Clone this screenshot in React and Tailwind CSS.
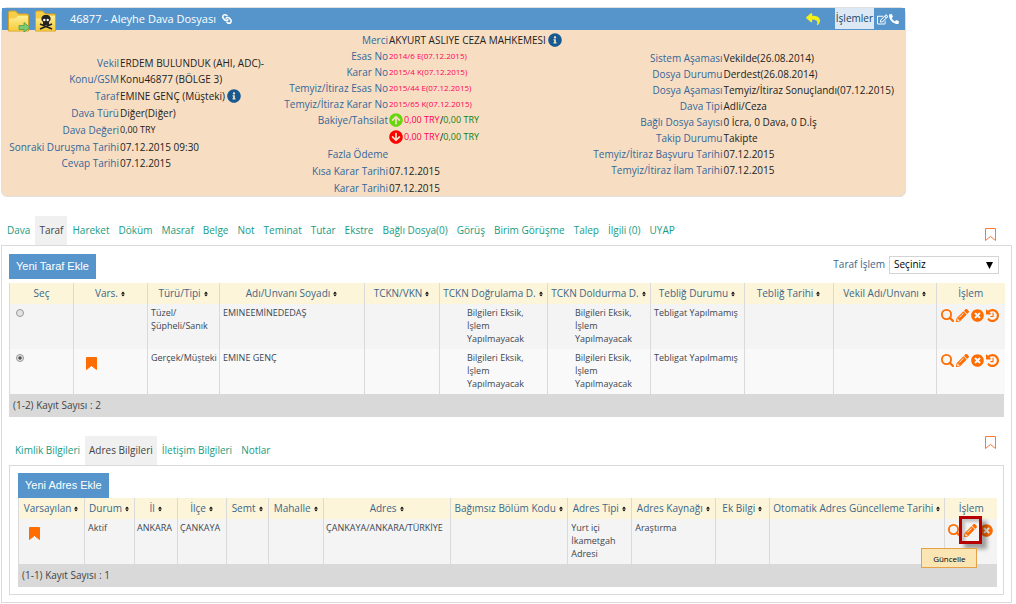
import React, { useState } from 'react';
import {
  FaLink,
  FaInfoCircle,
  FaArrowCircleUp,
  FaArrowCircleDown,
  FaReply,
  FaPhoneAlt,
  FaRegEdit,
  FaPencilAlt,
  FaTimesCircle,
  FaSort
} from 'react-icons/fa';

const mainTabs = [
  'Dava', 'Taraf', 'Hareket', 'Döküm', 'Masraf', 'Belge', 'Not', 'Teminat', 'Tutar', 'Ekstre',
  'Bağlı Dosya(0)', 'Görüş', 'Birim Görüşme', 'Talep', 'İlgili (0)', 'UYAP'
];
const subTabs = ['Kimlik Bilgileri', 'Adres Bilgileri', 'İletişim Bilgileri', 'Notlar'];

const partyColumns = [
  { label: 'Seç', width: 'w-[64px]' },
  { label: 'Vars.', sort: true, width: 'w-[74px]' },
  { label: 'Türü/Tipi', sort: true, width: 'w-[72px]' },
  { label: 'Adı/Unvanı Soyadı', sort: true, width: 'w-[145px]' },
  { label: 'TCKN/VKN', sort: true, width: 'w-[75px]' },
  { label: 'TCKN Doğrulama D.', sort: true, width: 'w-[108px]' },
  { label: 'TCKN Doldurma D.', sort: true, width: 'w-[103px]' },
  { label: 'Tebliğ Durumu', sort: true, width: 'w-[94px]' },
  { label: 'Tebliğ Tarihi', sort: true, width: 'w-[89px]' },
  { label: 'Vekil Adı/Unvanı', sort: true, width: 'w-[103px]' },
  { label: 'İşlem', width: 'w-[68px]' }
];

const addressColumns = [
  { label: 'Varsayılan', sort: true, width: 'w-[66px]' },
  { label: 'Durum', sort: true, width: 'w-[50px]' },
  { label: 'İl', sort: true, width: 'w-[43px]' },
  { label: 'İlçe', sort: true, width: 'w-[49px]' },
  { label: 'Semt', sort: true, width: 'w-[42px]' },
  { label: 'Mahalle', sort: true, width: 'w-[55px]' },
  { label: 'Adres', sort: true, width: 'w-[127px]' },
  { label: 'Bağımsız Bölüm Kodu', sort: true, width: 'w-[117px]' },
  { label: 'Adres Tipi', sort: true, width: 'w-[64px]' },
  { label: 'Adres Kaynağı', sort: true, width: 'w-[84px]' },
  { label: 'Ek Bilgi', sort: true, width: 'w-[54px]' },
  { label: 'Otomatik Adres Güncelleme Tarihi', sort: true, width: 'w-[175px]' },
  { label: 'İşlem', width: 'w-[52px]' }
];

const parties = [
  { id: 1, type: ['Tüzel/', 'Şüpheli/Sanık'], name: 'EMINEEMİNEDEDAŞ', isDefault: false },
  { id: 2, type: ['Gerçek/Müşteki'], name: 'EMINE GENÇ', isDefault: true }
];

const FolderIcon = ({ children }) => (
  <svg viewBox="0 0 24 24" className="size-6 shrink-0" aria-hidden="true">
    <defs>
      <linearGradient id="folderFill" x1="0" y1="0" x2="0" y2="1">
        <stop offset="0" stopColor="#ffee94" />
        <stop offset="1" stopColor="#f6cb38" />
      </linearGradient>
    </defs>
    <path d="M1.5 23V4.500Q1.5 3 3 3H8.500L11.500 6H20Q21.500 6 21.500 7.500V23Z" fill="#f5cd48" stroke="#d8a021" />
    <path d="M2 22.500V10.500H8L11 8H21V22.500Z" fill="url(#folderFill)" />
    {children}
  </svg>
);

const SearchIcon = ({ className }) => (
  <svg viewBox="0 0 13 13" className={className} fill="none" stroke="currentColor" aria-hidden="true">
    <circle cx="5.500" cy="5.500" r="4.600" strokeWidth="1.800" />
    <path d="M8.900 8.900L12 12" strokeWidth="2.200" strokeLinecap="round" />
  </svg>
);

const HistoryIcon = ({ className }) => (
  <svg viewBox="0 0 1536 1536" className={className} fill="currentColor" aria-hidden="true">
    <path
      transform="translate(0 1408) scale(1 -1)"
      d="M1536 640q0-156-61-298t-164-245-245-164-298-61q-172 0-327 72.500T177 149q-7 10-6.500 22.500t8.500 20.500l137 138q10 9 25 9 16-2 23-12 73-95 179-147t225-52q104 0 198.500 40.500t163.500 109.500 109.500 163.500 40.500 198.500-40.500 198.500-109.500 163.500-163.500 109.500-198.500 40.500q-98 0-188-35.500t-160-101.500l137-138q31-30 14-69-17-40-59-40H64q-26 0-45 19T0 832v448q0 42 40 59 39 17 69-14l130-129q107 101 244.500 156.500T768 1408q156 0 298-61t245-164 164-245 61-298zM896 928V480q0-14-9-23t-23-9H544q-14 0-23 9t-9 23v64q0 14 9 23t23 9h224v352q0 14 9 23t23 9h64q14 0 23-9t9-23z"
    />
  </svg>
);

const Bookmark = ({ filled }) => (
  <svg
    viewBox="0 0 11 13"
    className="block h-[13px] w-[11px]"
    fill={filled ? '#ff6c00' : 'none'}
    stroke={filled ? '#ff6c00' : '#ff7733'}
    aria-hidden="true"
  >
    <path d="M.5 .5H10.500V12.500L5.500 8.500L.5 12.500Z" />
  </svg>
);

const Info = () => (
  <button type="button" aria-label="Bilgi" className="ml-0.5 text-[#175a92]">
    <FaInfoCircle className="size-3.5" />
  </button>
);

const Row = ({ label, tall, children }) => (
  <div className={`flex items-center text-[10px] whitespace-nowrap ${tall ? 'h-[18px]' : 'h-4'}`}>
    <dt className="w-1/2 shrink-0 text-right text-[#336699]">{label}</dt>
    <dd className="flex items-center pl-px text-[#222]">{children}</dd>
  </div>
);

const Red = ({ children }) => <span className="text-[8px] text-[#ff0055]">{children}</span>;

const Amount = ({ icon }) => (
  <>
    {icon}
    <span className="text-[9px] text-[#ff0055]">0,00 TRY</span>
    <span>/</span>
    <span className="text-[9px] text-[#118011]">0,00 TRY</span>
  </>
);

const Tabs = ({ items, active, onSelect }) => (
  <div role="tablist" className="flex gap-px pl-0.5">
    {items.map((item) => (
      <button
        key={item}
        type="button"
        role="tab"
        aria-selected={item === active}
        onClick={() => onSelect(item)}
        className={`h-[29px] px-1 text-[10px] whitespace-nowrap ${
          item === active ? 'bg-[#f0f0f0] text-[#444]' : 'text-[#169b82]'
        }`}
      >
        {item}
      </button>
    ))}
  </div>
);

const BookmarkButton = () => (
  <button type="button" aria-label="Yer imi" className="block">
    <Bookmark />
  </button>
);

const AddButton = ({ children }) => (
  <button
    type="button"
    className="block h-[25px] bg-[#5595cb] px-[7px] font-['Liberation_Sans',sans-serif] text-[11px] whitespace-nowrap text-white"
  >
    {children}
  </button>
);

const TableHead = ({ columns }) => (
  <thead>
    <tr className="h-[21px] bg-[#fcf5da]">
      {columns.map(({ label, sort, width }) => (
        <th
          key={label}
          className={`${width} border-l border-[#dadada] p-0 text-center text-[10px] font-normal whitespace-nowrap text-[#3d6688]`}
        >
          {label}
          {sort && <FaSort className="ml-0.5 inline size-1.5 text-black" />}
        </th>
      ))}
    </tr>
  </thead>
);

const Cell = ({ children, className = 'px-[3px]' }) => (
  <td className={`border-l border-[#dadada] pt-0.5 align-top text-[9px] leading-[13px] text-[#3c4650] ${className}`}>
    {children}
  </td>
);

const Count = ({ children }) => (
  <div className="flex h-[23px] items-center bg-[#d9d9d9] px-1 text-[10px] text-[#444]">{children}</div>
);

const Action = ({ label, icon: Icon }) => (
  <button type="button" aria-label={label} className="block text-[#ff6c00]">
    <Icon className="size-[13px]" />
  </button>
);

const CheckMessage = () => (
  <>
    Bilgileri Eksik,
    <br />
    İşlem
    <br />
    Yapılmayacak
  </>
);

const App = () => {
  const [tab, setTab] = useState('Taraf');
  const [subTab, setSubTab] = useState('Adres Bilgileri');
  const [selected, setSelected] = useState(2);

  return (
    <div className="min-h-screen bg-white pr-1 pl-px font-['Open_Sans',sans-serif]">
      {/* Case summary */}
      <section className="mt-[7px] w-[905px] max-w-full rounded-md border border-[#e0e0e0] bg-[#f7dec3]">
        <header className="flex h-[22px] items-center bg-[#5595cb] text-white">
          <div className="flex gap-[3px] self-start pl-[5px]">
            <FolderIcon>
              <path d="M12 17.500H17V14.500L23 19.500L17 24V21.500H12Z" fill="#7cc873" stroke="#4f9d50" strokeWidth=".8" />
            </FolderIcon>
            <FolderIcon>
              <path d="M6 16L18 21M18 16L6 21" stroke="#222" strokeWidth="1.800" />
              <path d="M12 7C8.500 7 7 9 7.500 12L9 14V17H15V14L16.500 12C17 9 15.500 7 12 7Z" fill="#222" />
              <circle cx="10.300" cy="12" r="1.200" fill="#fff" />
              <circle cx="13.700" cy="12" r="1.200" fill="#fff" />
            </FolderIcon>
          </div>
          <h1 className="ml-3 text-[11px] font-medium whitespace-nowrap">46877 - Aleyhe Dava Dosyası</h1>
          <FaLink className="ml-1.5 size-2.5 rotate-90" />
          <div className="ml-auto flex h-full items-center">
            <button type="button" aria-label="Geri" className="mr-[15px] text-[#f4ef16]">
              <FaReply className="size-3.5" />
            </button>
            <button
              type="button"
              className="h-[21px] self-start bg-[#dce9f5] px-px text-[10px] font-medium text-[#174466]"
            >
              İşlemler
            </button>
            <button type="button" aria-label="Düzenle" className="ml-[3px]">
              <FaRegEdit className="size-[11px]" />
            </button>
            <button type="button" aria-label="Ara" className="mr-[6px] ml-px">
              <FaPhoneAlt className="size-2.5" />
            </button>
          </div>
        </header>
        <div className="flex h-[166px]">
          <dl className="w-[234px] pt-[25px]">
            <Row label="Vekil">ERDEM BULUNDUK (AHI, ADC)-</Row>
            <Row label="Konu/GSM">Konu46877 (BÖLGE 3)</Row>
            <Row label="Taraf" tall>EMINE GENÇ (Müşteki)<Info /></Row>
            <Row label="Dava Türü">Diğer(Diğer)</Row>
            <Row label="Dava Değeri" tall><span className="text-[9px]">0,00 TRY</span></Row>
            <Row label="Sonraki Duruşma Tarihi">07.12.2015 09:30</Row>
            <Row label="Cevap Tarihi">07.12.2015</Row>
          </dl>
          <dl className="w-[304px] pt-[2px]">
            <Row label="Merci">AKYURT ASLIYE CEZA MAHKEMESI<Info /></Row>
            <Row label="Esas No"><Red>2014/6 E(07.12.2015)</Red></Row>
            <Row label="Karar No"><Red>2015/4 K(07.12.2015)</Red></Row>
            <Row label="Temyiz/İtiraz Esas No"><Red>2015/44 E(07.12.2015)</Red></Row>
            <Row label="Temyiz/İtiraz Karar No"><Red>2015/65 K(07.12.2015)</Red></Row>
            <Row label="Bakiye/Tahsilat">
              <Amount icon={<FaArrowCircleUp className="mr-px size-3.5 text-[#66d60f]" />} />
            </Row>
            <Row label="" tall>
              <Amount icon={<FaArrowCircleDown className="mr-px size-3.5 text-[#ff0000]" />} />
            </Row>
            <Row label="Fazla Ödeme" />
            <Row label="Kısa Karar Tarihi" tall>07.12.2015</Row>
            <Row label="Karar Tarihi">07.12.2015</Row>
          </dl>
          <dl className="flex-1 pt-5">
            <Row label="Sistem Aşaması">Vekilde(26.08.2014)</Row>
            <Row label="Dosya Durumu">Derdest(26.08.2014)</Row>
            <Row label="Dosya Aşaması">Temyiz/İtiraz Sonuçlandı(07.12.2015)</Row>
            <Row label="Dava Tipi">Adli/Ceza</Row>
            <Row label="Bağlı Dosya Sayısı">0 İcra, 0 Dava, 0 D.İş</Row>
            <Row label="Takip Durumu">Takipte</Row>
            <Row label="Temyiz/İtiraz Başvuru Tarihi">07.12.2015</Row>
            <Row label="Temyiz/İtiraz İlam Tarihi">07.12.2015</Row>
          </dl>
        </div>
      </section>

      <div className="mt-[19px] flex items-center justify-between pr-4">
        <Tabs items={mainTabs} active={tab} onSelect={setTab} />
        <div className="pt-[7px]">
          <BookmarkButton />
        </div>
      </div>

      {/* Parties */}
      <main className="border border-[#dadada] px-[7px] pt-2 pb-[7px]">
        <div className="flex items-center justify-between">
          <AddButton>Yeni Taraf Ekle</AddButton>
          <div className="flex items-center gap-1 pr-[5px] pb-1 text-[10px] text-[#3d6688]">
            <label htmlFor="partyAction">Taraf İşlem</label>
            <div className="relative">
              <select
                id="partyAction"
                className="block h-[18px] w-[110px] appearance-none border border-[#d4d4d4] bg-white px-1 text-black"
              >
                <option>Seçiniz</option>
              </select>
              <svg viewBox="0 0 7 7" className="pointer-events-none absolute top-1.5 right-1.5 size-[7px]" aria-hidden="true">
                <path d="M0 0H7L3.500 7Z" />
              </svg>
            </div>
          </div>
        </div>
        <table className="mt-1 w-full table-fixed">
          <TableHead columns={partyColumns} />
          <tbody>
            {parties.map((party) => (
              <tr key={party.id} className="h-[45px] odd:bg-[#f4f4f4] even:bg-[#f9f9f9]">
                <Cell className="px-[6px]">
                  <input
                    type="radio"
                    name="party"
                    aria-label={party.name}
                    checked={selected === party.id}
                    onChange={() => setSelected(party.id)}
                    className="mt-[3px] block size-2 appearance-none rounded-full border border-[#999] bg-[#e2e2e2] checked:bg-[radial-gradient(circle,#555_30%,#e2e2e2_50%)]"
                  />
                </Cell>
                <Cell className="px-3">
                  {party.isDefault && <div className="pt-1.5"><Bookmark filled /></div>}
                </Cell>
                <Cell>{party.type.map((line) => <div key={line}>{line}</div>)}</Cell>
                <Cell>{party.name}</Cell>
                <Cell />
                <Cell className="pl-[27px]"><CheckMessage /></Cell>
                <Cell className="pl-[27px]"><CheckMessage /></Cell>
                <Cell>Tebligat Yapılmamış</Cell>
                <Cell />
                <Cell />
                <Cell>
                  <div className="flex gap-0.5 pt-[3px] pl-px">
                    <Action label="Görüntüle" icon={SearchIcon} />
                    <Action label="Güncelle" icon={FaPencilAlt} />
                    <Action label="Sil" icon={FaTimesCircle} />
                    <Action label="Geçmiş" icon={HistoryIcon} />
                  </div>
                </Cell>
              </tr>
            ))}
          </tbody>
        </table>
        <Count>(1-2) Kayıt Sayısı : 2</Count>

        <div className="mt-[19px] flex items-start justify-between pr-2">
          <Tabs items={subTabs} active={subTab} onSelect={setSubTab} />
          <BookmarkButton />
        </div>

        {/* Addresses */}
        <section className="border border-[#dadada] pt-[7px] pr-[6px] pb-[7px] pl-2">
          <AddButton>Yeni Adres Ekle</AddButton>
          <table className="w-full table-fixed">
            <TableHead columns={addressColumns} />
            <tbody>
              <tr className="h-[45px] bg-[#f4f4f4]">
                <Cell className="px-[10px]"><div className="pt-1.5"><Bookmark filled /></div></Cell>
                <Cell>Aktif</Cell>
                <Cell className="px-[2px]">ANKARA</Cell>
                <Cell className="px-[2px]">ÇANKAYA</Cell>
                <Cell />
                <Cell />
                <Cell className="px-[2px]">ÇANKAYA/ANKARA/TÜRKİYE</Cell>
                <Cell />
                <Cell>Yurt içi<br />İkametgah<br />Adresi</Cell>
                <Cell>Araştırma</Cell>
                <Cell />
                <Cell />
                <Cell>
                  <div className="flex gap-[3px] pt-[3px]">
                    <Action label="Görüntüle" icon={SearchIcon} />
                    <div className="relative z-10">
                      <Action label="Güncelle" icon={FaPencilAlt} />
                      <div className="pointer-events-none absolute -top-2 -left-[5px] h-7 w-[23px] border-[3px] border-[#b80000] shadow-[5px_5px_4px_rgba(0,0,0,0.35),inset_3px_3px_3px_rgba(0,0,0,0.2)]" />
                      <div
                        role="tooltip"
                        className="absolute top-6 -left-[43px] flex h-5 w-14 items-center justify-center border border-[#e5a04a] bg-[#fbe5b3] text-[8px] text-black"
                      >
                        Güncelle
                      </div>
                    </div>
                    <Action label="Sil" icon={FaTimesCircle} />
                  </div>
                </Cell>
              </tr>
            </tbody>
          </table>
          <Count>(1-1) Kayıt Sayısı : 1</Count>
        </section>
      </main>
    </div>
  );
};

export default App;
